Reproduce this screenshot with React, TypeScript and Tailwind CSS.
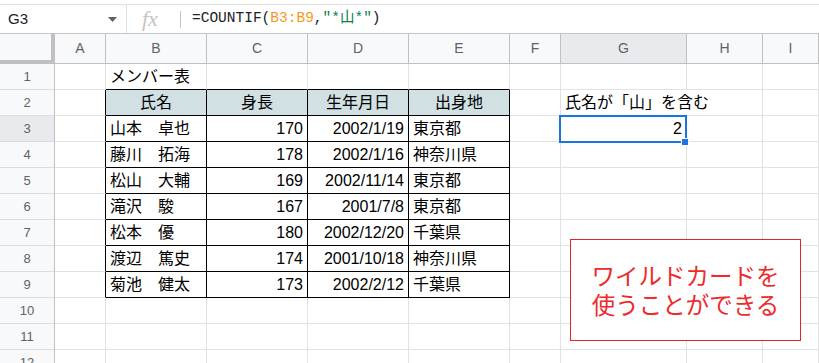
import React from 'react';

const sans = "font-['Liberation_Sans','Noto_Sans_CJK_JP',sans-serif]";

const cols = [
  { key: 'A', w: 'w-[51px]' },
  { key: 'B', w: 'w-[101px]' },
  { key: 'C', w: 'w-[101px]' },
  { key: 'D', w: 'w-[101px]' },
  { key: 'E', w: 'w-[101px]' },
  { key: 'F', w: 'w-[51px]' },
  { key: 'G', w: 'w-[126px]' },
  { key: 'H', w: 'w-[76px]' },
  { key: 'I', w: 'flex-1' },
];

type Cell = { text: string; align?: 'left' | 'center' | 'right'; head?: boolean; spill?: boolean };

const members = [
  ['山本　卓也', '170', '2002/1/19', '東京都'],
  ['藤川　拓海', '178', '2002/1/16', '神奈川県'],
  ['松山　大輔', '169', '2002/11/14', '東京都'],
  ['滝沢　駿', '167', '2001/7/8', '東京都'],
  ['松本　優', '180', '2002/12/20', '千葉県'],
  ['渡辺　篤史', '174', '2001/10/18', '神奈川県'],
  ['菊池　健太', '173', '2002/2/12', '千葉県'],
];

// row number -> column index -> cell
const data: Record<number, Record<number, Cell>> = {
  1: { 1: { text: 'メンバー表' } },
  2: {
    1: { text: '氏名', align: 'center', head: true },
    2: { text: '身長', align: 'center', head: true },
    3: { text: '生年月日', align: 'center', head: true },
    4: { text: '出身地', align: 'center', head: true },
    6: { text: '氏名が「山」を含む', spill: true },
  },
};
members.forEach((m, i) => {
  data[i + 3] = {
    1: { text: m[0] },
    2: { text: m[1], align: 'right' },
    3: { text: m[2], align: 'right' },
    4: { text: m[3] },
  };
});
data[3][6] = { text: '2', align: 'right' };

const inTable = (r: number, c: number) => r >= 2 && r <= 9 && c >= 1 && c <= 4;

const rows = Array.from({ length: 12 }, (_, i) => i + 1);

function GridCell({ r, c }: { r: number; c: number }) {
  const cell = data[r]?.[c];
  const right = cell?.spill
    ? 'border-r-white'
    : inTable(r, c) || inTable(r, c + 1)
      ? 'border-r-black'
      : 'border-r-[#e2e2e2]';
  const bottom = inTable(r, c) || inTable(r + 1, c) ? 'border-b-black' : 'border-b-[#e2e2e2]';
  const bg = cell?.head ? 'bg-[#d0e0e3]' : '';
  const align =
    cell?.align === 'right' ? 'justify-end' : cell?.align === 'center' ? 'justify-center' : 'justify-start';
  return (
    <div
      className={`${cols[c].w} h-[26px] shrink-0 border-r border-b ${right} ${bottom} ${bg} flex items-center ${align} px-[4px] overflow-visible whitespace-nowrap`}
    >
      {cell && <span className="relative z-10 text-[16px] leading-none text-black">{cell.text}</span>}
    </div>
  );
}

export default function App() {
  return (
    <div className={`relative w-[819px] h-[363px] overflow-hidden bg-white ${sans}`}>
      {/* formula bar */}
      <div className="h-[34px] pt-[4px]">
        <div className="h-[30px] border-t border-b border-[#e0e0e0] border-b-[#c4c4c4] flex items-center">
          <div className="w-[127px] h-full border-r border-[#e0e0e0] flex items-center justify-between pl-[8px] pr-[9px]">
            <span className="text-[15px] text-[#202124]">G3</span>
            <svg width="9" height="5" viewBox="0 0 9 5">
              <path d="M0 0h9L4.5 5z" fill="#5f6368" />
            </svg>
          </div>
          <span className="ml-[15px] w-[22px] font-['Liberation_Serif',serif] italic text-[22px] leading-none text-[#c4c4c4]">
            fx
          </span>
          <div className="ml-[16px] w-px h-[17px] bg-[#c4c4c4]" />
          <span className="ml-[11px] font-['Liberation_Mono','Noto_Sans_CJK_JP',monospace] text-[14.5px] text-[#202124] whitespace-nowrap">
            =COUNTIF(<span className="text-[#f7981d]">B3:B9</span>,
            <span className="text-[#0b8043]">"*山*"</span>)
          </span>
        </div>
      </div>

      {/* column headers */}
      <div className="flex h-[30px]">
        <div className="w-[55px] shrink-0 h-full bg-[#f8f9fa] border-r-4 border-b-4 border-[#c0c0c0]" />
        {cols.map((col) => (
          <div
            key={col.key}
            className={`${col.w} shrink-0 h-full border-r border-b border-[#c0c0c0] ${
              col.key === 'G' ? 'bg-[#e8eaed]' : 'bg-[#f8f9fa]'
            } flex items-center justify-center text-[14px] text-[#5f6368]`}
          >
            {col.key}
          </div>
        ))}
      </div>

      {/* rows */}
      {rows.map((r) => (
        <div key={r} className="flex">
          <div
            className={`w-[55px] shrink-0 h-[26px] border-r border-r-[#c0c0c0] border-b border-b-[#dadce0] ${
              r === 3 ? 'bg-[#e8eaed]' : 'bg-[#f8f9fa]'
            } flex items-center justify-center text-[13px] text-[#5f6368]`}
          >
            {r}
          </div>
          {cols.map((_, c) => (
            <GridCell key={c} r={r} c={c} />
          ))}
        </div>
      ))}

      {/* selection on G3 */}
      <div className="absolute left-[559px] top-[115px] w-[128px] h-[28px] border-2 border-[#1a73e8] pointer-events-none" />
      <div className="absolute left-[681px] top-[138px] w-[8px] h-[8px] bg-[#1a73e8] border border-white" />

      {/* text box */}
      <div className="absolute z-20 left-[570px] top-[239px] w-[231px] h-[102px] border border-[#e8222a] bg-white flex flex-col items-center justify-center">
        <p className="font-['Noto_Sans_CJK_JP',sans-serif] text-[23.5px] leading-[29px] text-[#ee2a2a] text-center">
          ワイルドカードを
          <br />
          使うことができる
        </p>
      </div>
    </div>
  );
}
